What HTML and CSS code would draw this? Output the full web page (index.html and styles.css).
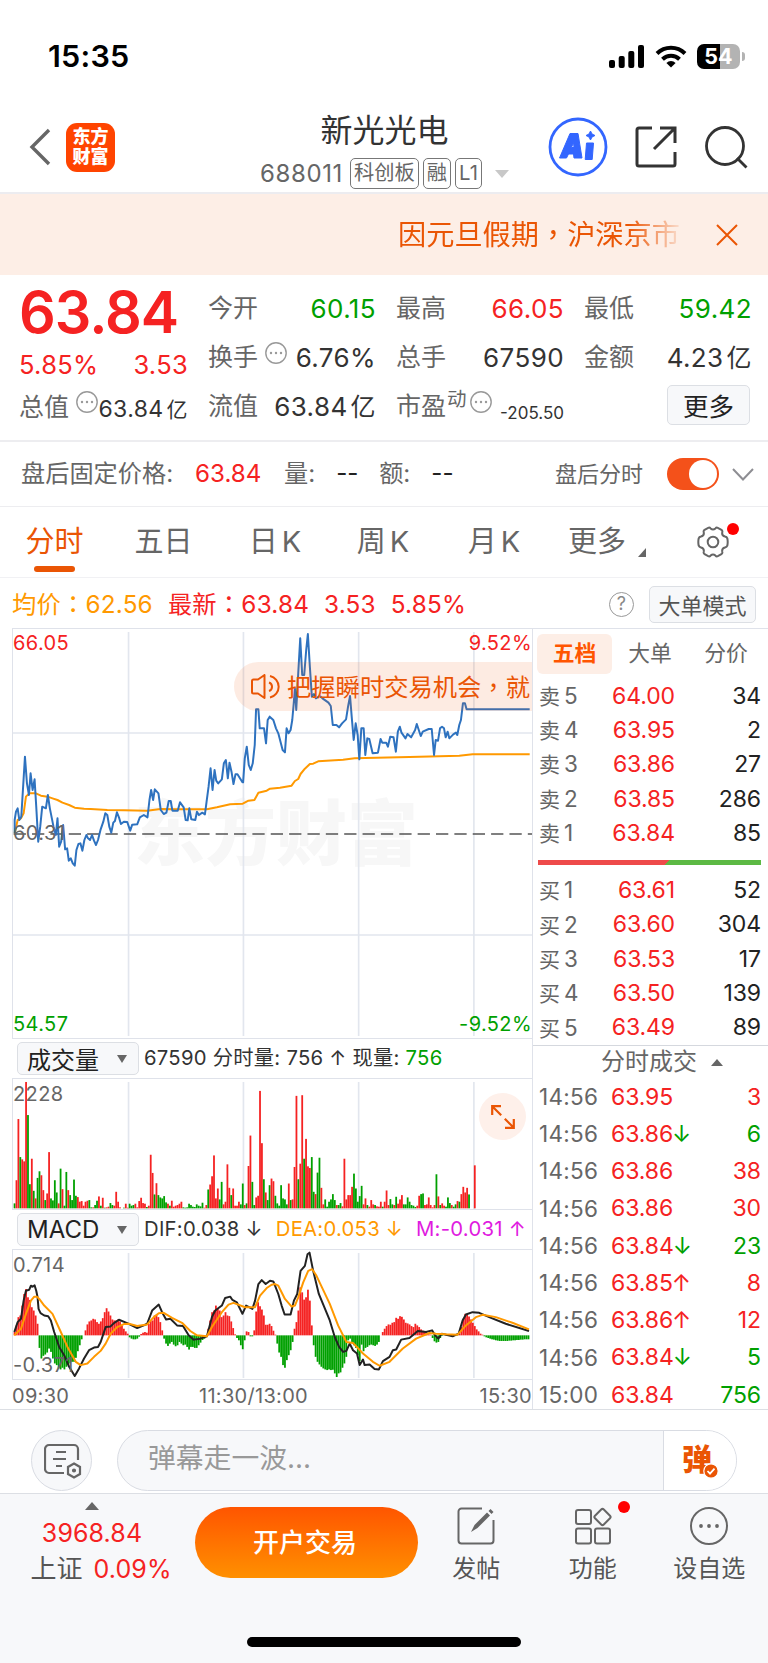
FILE: index.html
```html
<!DOCTYPE html>
<html lang="zh-CN">
<head>
    <meta charset="UTF-8">
    <meta name="viewport" content="width=device-width, initial-scale=1.0">
    <title>新光光电 688011</title>
    <link rel="stylesheet" href="styles.css">
</head>
<body>

    <!-- Status bar -->
    <div class="status-bar">
        <span class="clock">15:35</span>
        <div class="status-icons">
            <svg class="signal" width="36" height="23" viewBox="0 0 36 23">
                <rect x="0" y="15" width="6" height="8" rx="2"/>
                <rect x="9.7" y="11" width="6" height="12" rx="2"/>
                <rect x="19.3" y="6" width="6" height="17" rx="2"/>
                <rect x="29" y="0" width="6" height="23" rx="2"/>
            </svg>
            <svg class="wifi" width="32" height="23" viewBox="0 0 32 23" fill="none" stroke="#000" stroke-width="4">
                <path d="M2 8.5a20 20 0 0 1 28 0"/>
                <path d="M7.5 14.2a12.3 12.3 0 0 1 17 0"/>
                <path d="M16 22.5l-4.6-4.6a6.5 6.5 0 0 1 9.2 0z" fill="#000" stroke="none"/>
            </svg>
            <span class="battery">54</span>
            <span class="battery-tip"></span>
        </div>
    </div>

    <!-- Header -->
    <header class="header">
        <div class="header-left">
            <svg width="22" height="38" viewBox="0 0 22 38" fill="none" stroke="#666" stroke-width="3.4"><path d="M20 2L3 19l17 17"/></svg>
            <div class="logo">东方<br>财富</div>
        </div>
        <div class="header-title">
            <h1>新光光电</h1>
            <div class="stock-code">
                <span class="code">688011</span>
                <span class="tag">科创板</span>
                <span class="tag">融</span>
                <span class="tag">L1</span>
                <i class="tri-down"></i>
            </div>
        </div>
        <div class="header-right">
            <svg width="60" height="60" viewBox="0 0 60 60">
                <circle cx="30" cy="30" r="28" fill="none" stroke="#3366ff" stroke-width="2.8"/>
                <path d="M22 16.5h8l4 24.5h-8l-.5-4h-5l-2 4h-7z M23.500 30.500h2.500l-.5-5z" fill="#3366ff" fill-rule="evenodd" stroke="#3366ff" stroke-linejoin="round"/>
                <path d="M38.500 26h7l-1.300 16.500h-7z" fill="#3366ff" stroke="#3366ff" stroke-linejoin="round"/>
                <path d="M42.500 14l1.500 3 3 1.500-3 1.500-1.500 3-1.500-3-3-1.500 3-1.500z" fill="#3366ff" stroke="#3366ff"/>
            </svg>
            <svg width="42" height="42" viewBox="0 0 42 42" fill="none" stroke="#333" stroke-width="3">
                <path d="M17 2H4a2 2 0 0 0-2 2v34a2 2 0 0 0 2 2h34a2 2 0 0 0 2-2V26"/>
                <path d="M25 2h15v15M40 2L19 23"/>
            </svg>
            <svg width="43" height="43" viewBox="0 0 43 43" fill="none" stroke="#333" stroke-width="2.8">
                <circle cx="20" cy="20" r="18.500"/>
                <path d="M32 32l9.500 9.500"/>
            </svg>
        </div>
    </header>

    <!-- Notice -->
    <div class="notice">
        <div class="notice-text" lang="zh-TW">因元旦假期，沪深京市</div>
        <svg width="22" height="22" viewBox="0 0 22 22" stroke="#ea5504" stroke-width="2"><path d="M1 1l20 20M21 1L1 21"/></svg>
    </div>

    <!-- Quote -->
    <section class="quote">
        <div class="quote-main">
            <div class="price">63.84</div>
            <div class="item red"><span>5.85%</span><span>3.53</span></div>
            <div class="item cap"><label>总值</label><svg class="more-dot" viewBox="0 0 22 22"><use href="#dots"/></svg><span>63.84<em>亿</em></span></div>
        </div>
        <div class="quote-grid">
            <div class="item"><label>今开</label><span class="green">60.15</span></div>
            <div class="item"><label>最高</label><span class="red">66.05</span></div>
            <div class="item"><label>最低</label><span class="green">59.42</span></div>
            <div class="item"><label>换手</label><svg class="more-dot" viewBox="0 0 22 22"><use href="#dots"/></svg><span>6.76%</span></div>
            <div class="item"><label>总手</label><span>67590</span></div>
            <div class="item"><label>金额</label><span>4.23<em>亿</em></span></div>
            <div class="item"><label>流值</label><span>63.84<em>亿</em></span></div>
            <div class="item"><label>市盈</label><sup>动</sup><svg class="more-dot tight" viewBox="0 0 22 22"><use href="#dots"/></svg><span class="small">-205.50</span></div>
            <div class="item"><button class="btn-more">更多</button></div>
        </div>
    </section>

    <!-- After-hours row -->
    <div class="after-hours">
        <span class="after-price-label">盘后固定价格:</span>
        <span class="red after-price">63.84</span>
        <span>量:</span>
        <b>--</b>
        <span>额:</span>
        <b>--</b>
        <span class="after-switch-label">盘后分时</span>
        <i class="switch"></i>
        <svg width="22" height="13" viewBox="0 0 22 13" fill="none" stroke="#8e8e93" stroke-width="2"><path d="M1 1l10 10.500L21 1"/></svg>
    </div>

    <!-- Period tabs -->
    <nav class="tabs">
        <a class="active">分时</a>
        <a>五日</a>
        <a>日<i>K</i></a>
        <a>周<i>K</i></a>
        <a>月<i>K</i></a>
        <a class="tab-more">更多</a>
        <div class="gear">
            <svg width="34" height="32" viewBox="0 0 34 32" fill="none" stroke="#666" stroke-width="2">
                <path d="M12.200 1.800q1.400-.6 2.400.6 2.400 2.200 4.800 0 1-1.200 2.400-.6l3.600 2q1.300.9.900 2.300-.8 3.500 2.700 4.400 1.800.4 2.300 1.800.8 3.700 0 7.400-.5 1.400-2.300 1.800-3.500.9-2.700 4.400.4 1.400-.9 2.300l-3.600 2q-1.400.6-2.400-.6-2.400-2.200-4.800 0-1 1.200-2.400.6l-3.600-2q-1.300-.9-.9-2.300.8-3.500-2.700-4.400-1.800-.4-2.300-1.800-.8-3.700 0-7.400.5-1.400 2.300-1.800 3.500-.9 2.700-4.400-.4-1.400.9-2.300z"/>
                <circle cx="17" cy="16" r="5.300"/>
            </svg>
        </div>
    </nav>

    <!-- Average / latest price -->
    <div class="info" lang="zh-TW">
        <span class="orange">均价：62.56</span>
        <span class="red">最新：63.84</span>
        <span class="red">3.53</span>
        <span class="red">5.85%</span>
        <i class="help">?</i>
        <button class="btn-mode" lang="zh-CN">大单模式</button>
    </div>

    <main class="board">
        <!-- Charts -->
        <div class="charts">
            <div class="chart chart-price">
                <div class="watermark">东方财富</div>
                <svg viewBox="36 27 1563 1227" preserveAspectRatio="none">
                    <path class="grid" d="M384 36V1248M730 36V1248M1077 36V1248M1424 36V1248M36 339H1599M36 945H1599"/>
                    <path class="mid" d="M38 642H1599"/>
                    <polyline class="line avg" points="41,640 50,600 60,595 68,580 75,530 85,520 105,520 120,527 140,530 155,535 170,540 185,548 205,555 222,563 250,566 270,567 320,570 370,571 440,572 480,567 540,568 620,568 650,562 690,553 728,551 745,542 763,540 775,518 800,512 810,506 840,503 875,497 885,483 895,477 902,462 915,446 930,432 940,431 955,424 1030,419 1065,415 1230,411 1380,407 1420,403 1592,403"/>
                    <polyline class="line price-line" points="41,640 41,600 45,575 50,565 55,600 61,590 72,410 78,490 84,525 89,460 95,510 101,478 106,560 112,665 118,620 124,560 135,565 141,525 147,565 158,620 165,645 170,595 175,680 181,665 187,615 193,688 199,685 204,722 210,715 216,730 222,737 227,690 233,672 239,670 245,692 251,660 257,645 262,655 268,660 274,645 280,662 286,675 292,660 300,628 308,605 314,580 320,585 326,620 332,638 338,608 343,603 349,577 355,592 361,612 370,605 380,606 389,632 395,614 410,613 418,592 430,585 441,592 447,540 452,510 458,540 463,508 474,520 481,570 490,582 498,578 505,543 511,543 516,572 532,572 539,547 550,562 556,600 562,601 567,565 573,598 585,600 590,575 596,585 606,578 614,583 619,545 625,500 631,445 637,510 643,450 648,482 654,490 665,478 671,430 677,420 683,475 688,428 694,455 700,492 706,463 712,463 727,487 729,487 734,415 740,380 746,435 752,450 758,430 764,375 768,268 775,268 779,325 792,325 798,370 803,300 809,290 820,300 828,325 835,340 848,390 855,397 860,325 866,340 872,330 877,300 881,255 885,205 889,270 895,160 901,55 907,165 913,165 919,90 924,42 930,140 936,230 942,222 948,235 960,228 968,235 986,248 993,258 999,315 1010,315 1018,322 1027,310 1039,298 1045,260 1051,228 1056,290 1062,360 1068,310 1074,345 1079,418 1085,325 1092,325 1097,405 1103,355 1109,357 1119,400 1135,398 1143,357 1148,368 1160,368 1165,380 1172,350 1182,352 1189,395 1195,335 1201,320 1206,338 1218,355 1224,342 1235,352 1247,330 1252,312 1264,348 1270,335 1288,327 1297,327 1304,405 1309,360 1316,362 1322,325 1328,320 1334,325 1339,352 1345,335 1350,355 1362,343 1370,338 1374,345 1380,315 1385,300 1391,250 1397,250 1402,268 1592,268"/>
                </svg>
                <span class="label top left red">66.05</span>
                <span class="label top right red">9.52%</span>
                <span class="label middle left">60.31</span>
                <span class="label bottom left green">54.57</span>
                <span class="label bottom right green">-9.52%</span>
                <div class="bubble" lang="zh-TW">
                    <svg width="32" height="26" viewBox="0 0 32 26" fill="none" stroke="#ea5504" stroke-width="2" stroke-linejoin="round">
                        <path d="M2 7q0-1.500 1.500-1.500H8L14.500 1v23L8 19.500H3.500Q2 19.500 2 18z"/>
                        <path d="M19 8.500a4.500 4.500 0 0 1 0 8.500M20 2a11 11 0 0 1 0 21.500"/>
                    </svg>
                    <span>把握瞬时交易机会，就</span>
                </div>
            </div>

            <div class="indicator">
                <button class="select">成交量</button>
                <span>67590 分时量: 756 ↑ 现量: <span class="green">756</span></span>
            </div>
            <div class="chart chart-volume">
                <svg id="volume" viewBox="36 204 1563 393" preserveAspectRatio="none">
                    <path class="grid" d="M384 213V597M730 213V597M1077 213V597M1424 213V597"/>
                </svg>
                <span class="label top left">2228</span>
                <div class="expand">
                    <svg width="24" height="24" viewBox="0 0 24 24" fill="none" stroke="#ea5504" stroke-width="2.200">
                        <path d="M1.200 10V1.200H10M1.200 1.200l9 9M22.800 14v8.800H14M22.800 22.800l-9-9"/>
                    </svg>
                </div>
            </div>

            <div class="indicator macd-head">
                <button class="select">MACD</button>
                <span>DIF:0.038 ↓</span>
                <span class="orange">DEA:0.053 ↓</span>
                <span class="magenta">M:-0.031 ↑</span>
            </div>
            <div class="chart chart-macd">
                <svg viewBox="36 717 1563 390" preserveAspectRatio="none">
                    <path class="grid" d="M384 726V1104M730 726V1104M1077 726V1104M1424 726V1104"/>
                    <g id="macd"></g>
                    <polyline class="line dif" points="40,965 50,935 60,925 68,870 75,840 85,837 90,825 95,828 101,824 106,840 110,860 113,895 119,908 130,915 142,917 150,930 160,965 175,1010 190,1035 205,1070 222,1098 235,1075 250,1045 265,1020 280,1012 292,1010 300,995 315,950 330,948 340,938 355,928 380,938 410,953 430,945 440,940 455,900 475,882 485,905 497,927 510,925 530,945 548,947 565,975 580,988 600,985 620,978 635,920 645,900 665,885 675,862 690,858 697,868 710,875 727,910 738,885 757,895 765,870 775,820 785,808 797,820 810,810 820,812 835,850 845,885 854,912 872,912 882,870 892,850 902,780 915,765 923,730 929,725 940,780 957,850 990,930 1005,980 1018,1010 1030,1025 1040,1022 1050,1000 1060,1020 1072,1030 1080,1065 1090,1048 1095,1065 1110,1063 1125,1077 1138,1078 1150,1053 1170,1040 1180,1020 1190,1018 1205,988 1230,983 1255,962 1280,965 1298,960 1307,975 1317,985 1327,970 1360,978 1378,970 1390,930 1400,912 1420,905 1440,907 1470,920 1520,940 1590,962"/>
                    <polyline class="line avg" points="40,975 60,955 75,910 90,870 100,858 108,858 115,865 130,885 155,910 180,965 200,1010 225,1055 240,1065 260,1060 280,1040 300,1022 315,1000 330,970 350,950 370,941 385,940 410,947 440,942 460,920 475,908 490,907 515,922 545,937 570,962 590,975 620,978 635,950 665,905 685,882 700,877 735,890 765,890 780,855 800,832 815,822 825,820 835,825 855,865 875,888 885,885 895,860 910,815 925,780 937,775 950,795 990,880 1015,945 1040,995 1060,998 1090,1030 1120,1055 1140,1067 1170,1055 1210,1015 1250,985 1290,968 1310,970 1340,972 1375,973 1400,945 1430,920 1450,913 1490,920 1540,937 1590,957"/>
                </svg>
                <span class="label top left">0.714</span>
                <span class="label bottom left">-0.371</span>
            </div>
            <div class="axis"><span>09:30</span><span>11:30/13:00</span><span>15:30</span></div>
        </div>

        <!-- Order book and trades -->
        <aside class="side">
            <div class="side-tabs"><a class="active">五档</a><a>大单</a><a>分价</a></div>
            <div class="book">
                <div class="row"><label>卖<i>5</i></label><span class="red">64.00</span><b>34</b></div>
                <div class="row"><label>卖<i>4</i></label><span class="red">63.95</span><b>2</b></div>
                <div class="row"><label>卖<i>3</i></label><span class="red">63.86</span><b>27</b></div>
                <div class="row"><label>卖<i>2</i></label><span class="red">63.85</span><b>286</b></div>
                <div class="row"><label>卖<i>1</i></label><span class="red">63.84</span><b>85</b></div>
            </div>
            <div class="ratio"></div>
            <div class="book">
                <div class="row"><label>买<i>1</i></label><span class="red">63.61</span><b>52</b></div>
                <div class="row"><label>买<i>2</i></label><span class="red">63.60</span><b>304</b></div>
                <div class="row"><label>买<i>3</i></label><span class="red">63.53</span><b>17</b></div>
                <div class="row"><label>买<i>4</i></label><span class="red">63.50</span><b>139</b></div>
                <div class="row"><label>买<i>5</i></label><span class="red">63.49</span><b>89</b></div>
            </div>
            <div class="trades-head">分时成交 <i class="tri-up"></i></div>
            <div class="trades">
                <div class="row"><label>14:56</label><span class="red">63.95</span><b class="red">3</b></div>
                <div class="row"><label>14:56</label><span class="red">63.86<i class="green">↓</i></span><b class="green">6</b></div>
                <div class="row"><label>14:56</label><span class="red">63.86</span><b class="red">38</b></div>
                <div class="row"><label>14:56</label><span class="red">63.86</span><b class="red">30</b></div>
                <div class="row"><label>14:56</label><span class="red">63.84<i class="green">↓</i></span><b class="green">23</b></div>
                <div class="row"><label>14:56</label><span class="red">63.85<i>↑</i></span><b class="red">8</b></div>
                <div class="row"><label>14:56</label><span class="red">63.86<i>↑</i></span><b class="red">12</b></div>
                <div class="row"><label>14:56</label><span class="red">63.84<i class="green">↓</i></span><b class="green">5</b></div>
                <div class="row"><label>15:00</label><span class="red">63.84</span><b class="green">756</b></div>
            </div>
        </aside>
    </main>

    <!-- Comment bar -->
    <div class="comment-bar">
        <div class="comment-set">
            <svg width="38" height="36" viewBox="0 0 38 36" fill="none" stroke="#666" stroke-width="2.200">
                <path d="M20 30H5a4 4 0 0 1-4-4V6a4 4 0 0 1 4-4h25a4 4 0 0 1 4 4v11"/>
                <path d="M12 9h10M9 16h13M12 23h6"/>
                <path d="M30 20.500l6 3.500v7l-6 3.500-6-3.500v-7z"/>
                <circle cx="30" cy="27.500" r="1" fill="#666"/>
            </svg>
        </div>
        <div class="comment-input">
            <span>弹幕走一波...</span>
            <div class="comment-toggle">
                弹
                <svg width="16" height="16" viewBox="0 0 16 16"><circle cx="8" cy="8" r="7.200" fill="#ea5504" stroke="#fff" stroke-width="1.200"/><path d="M4.500 8l2.500 2.700 4.500-5" fill="none" stroke="#fff" stroke-width="1.800"/></svg>
            </div>
        </div>
    </div>

    <!-- Bottom bar -->
    <footer class="footer">
        <div class="index">
            <i class="tri-up"></i>
            <div class="red">3968.84</div>
            <div class="index-name"><label>上证</label><span class="red">0.09%</span></div>
        </div>
        <button class="btn-open">开户交易</button>
        <div class="action">
            <svg width="38" height="38" viewBox="0 0 38 38" fill="none" stroke="#666" stroke-width="2">
                <path d="M25 1.500H4.500a3 3 0 0 0-3 3v29a3 3 0 0 0 3 3h29a3 3 0 0 0 3-3V13"/>
                <path d="M14 25l3.500-7L30 5.500l3 3L20.500 21z" fill="#666" stroke="none"/>
                <path d="M31.500 4l2-2 3 3-2 2z" fill="#666" stroke="none"/>
            </svg>
            <span>发帖</span>
        </div>
        <div class="action has-dot">
            <svg width="38" height="38" viewBox="0 0 38 38" fill="none" stroke="#666" stroke-width="2">
                <rect x="2" y="3" width="15" height="14" rx="2"/>
                <rect x="2" y="21.500" width="15" height="15" rx="2"/>
                <rect x="21" y="21.500" width="15" height="15" rx="2"/>
                <path d="M27.200 2.500q1.300-1.300 2.600 0l6.200 6.200q1.300 1.300 0 2.600l-6.200 6.200q-1.300 1.300-2.600 0L21 11.300q-1.300-1.300 0-2.600z"/>
            </svg>
            <span>功能</span>
        </div>
        <div class="action">
            <svg width="38" height="38" viewBox="0 0 38 38">
                <circle cx="19" cy="19" r="18" fill="none" stroke="#666" stroke-width="2"/>
                <g fill="#666"><circle cx="11" cy="19" r="1.900"/><circle cx="19" cy="19" r="1.900"/><circle cx="27" cy="19" r="1.900"/></g>
            </svg>
            <span>设自选</span>
        </div>
        <div class="home-bar"></div>
    </footer>

    <svg class="defs">
        <symbol id="dots" viewBox="0 0 22 22">
            <circle cx="11" cy="11" r="10.200" fill="none" stroke="#999" stroke-width="1.400"/>
            <g fill="#999"><circle cx="6" cy="11" r="1.200"/><circle cx="11" cy="11" r="1.200"/><circle cx="16" cy="11" r="1.200"/></g>
        </symbol>
    </svg>

    <script>
        const STEP = 5.775;

        // One bar per minute, r = up, g = down
        const volume = 'g15 r85 r270 g155 r148 r142 r382 g282 g73 r150 g53 r30 g92 g112 r100 r55 g25 r45 r170 g30 g24 g85 g48 r15 g120 r58 g8 g110 r55 g40 g25 g87 g38 r34 r20 r22 r8 r20 r23 g25 g3 r3 g10 g23 r36 g8 r32 g2 r3 r5 g16 g10 r8 r50 r20 r3 g0 g2 r14 r2 g14 g8 g10 r14 r3 r22 r32 r16 r14 g4 r8 r162 r107 g42 r76 g40 g33 g30 g37 g18 r14 g8 r23 r5 r8 r10 r14 r20 g3 g2 g3 g14 g10 g5 g4 g12 g8 g6 g17 r2 r10 g57 r72 r97 r160 r30 r60 g27 g80 r12 r20 r133 r62 g40 r60 r8 r8 r20 g12 g75 r10 g15 r128 r220 g80 g10 r33 r38 r355 r197 g88 r48 g25 g70 r90 r82 g38 g15 g8 g70 g30 g27 g12 r75 g25 r27 r125 r340 g88 r135 r342 g150 r210 r127 r122 g155 g50 r43 g108 g153 r62 r12 g27 g5 g20 g27 g43 g25 r10 g10 g16 r6 r150 r27 r40 r40 r65 g105 g60 g20 g37 g68 r12 r30 g10 r5 r25 r12 g10 r6 r5 r20 g5 r20 r54 r10 g28 g12 r10 g35 r14 r27 r40 g12 g12 g33 g20 g10 g8 g4 r8 r38 g43 g45 r10 r12 r33 r10 r3 r10 g103 r36 g10 r15 r8 g5 g33 g16 r10 g5 g12 r22 g20 r43 r65 r48 r62 g42 g0 g0 r130';

        const macd = [10, 30, 55, 60, 90, 125, 140, 115, 107, 85, 75, 60, 35, -38, -70, -62, -58, -52, -40, -50, -70, -85, -90, -100, -103, -98, -103, -95, -88, -85, -80, -80, -68, -48, -30, -12, 0, 15, 33, 42, 45, 50, 48, 40, 35, 42, 52, 70, 82, 72, 60, 48, 45, 45, 48, 42, 30, 20, 12, 5, -6, -10, -12, -12, -10, -4, 4, 8, 10, 8, 35, 43, 45, 60, 62, 55, 40, 15, -10, -25, -32, -25, -20, -28, -33, -30, -20, -25, -30, -28, -35, -43, -35, -35, -38, -38, -30, -22, -14, -10, -3, 20, 45, 70, 75, 90, 80, 75, 55, 60, 70, 60, 58, 42, 22, 3, -8, -15, -30, -42, -15, 12, 10, -3, -3, 15, 72, 100, 88, 78, 60, 32, 32, 35, 28, 14, 2, -25, -52, -65, -90, -98, -75, -60, -45, -20, 20, 40, 75, 145, 130, 108, 115, 138, 105, 30, -30, -65, -80, -88, -95, -100, -103, -105, -103, -105, -104, -115, -126, -115, -112, -98, -85, -65, -15, -10, -20, -30, -38, -60, -78, -28, -48, -38, -35, -30, -28, -30, -32, -28, -20, 0, 10, 20, 28, 33, 32, 38, 40, 53, 50, 58, 56, 48, 38, 36, 33, 28, 25, 35, 30, 25, 18, 14, 10, 6, 3, 2, -8, -18, -22, -20, -8, -2, 0, 1, 1, 0, -1, -1, -1, -1, 5, 25, 50, 65, 62, 57, 48, 38, 28, 18, 12, 5, 2, -3, -6, -8, -10, -12, -13, -15, -16, -17, -17, -17, -17, -17, -16, -16, -15, -15, -14, -14, -13, -13, -12, -12, -12];

        function addBar(parent, i, zero, value, color) {
            const rect = document.createElementNS('http://www.w3.org/2000/svg', 'rect');
            rect.setAttribute('x', 38 + i * STEP);
            rect.setAttribute('width', 5.4);
            rect.setAttribute('y', value > 0 ? zero - value : zero);
            rect.setAttribute('height', Math.abs(value));
            rect.setAttribute('class', color);
            parent.appendChild(rect);
        }

        const volumeChart = document.getElementById('volume');
        volume.split(' ').forEach((v, i) => {
            addBar(volumeChart, i, 595, +v.slice(1), v[0] === 'r' ? 'up' : 'down');
        });

        const macdChart = document.getElementById('macd');
        macd.forEach((v, i) => addBar(macdChart, i, 975, v, v > 0 ? 'up' : 'down'));
    </script>

</body>
</html>
```
FILE: styles.css
```css
* {
    box-sizing: border-box;
}

body {
    margin: 0;
    width: 768px;
    background: #fff;
    color: #333;
    font-family: Inter, "Noto Sans CJK SC", sans-serif;
    font-size: 25px;
    line-height: 1;
    white-space: nowrap;
}

i, em {
    font-style: normal;
}

b {
    font-weight: 400;
}

button {
    font-family: Inter, "Noto Sans CJK SC", sans-serif;
    padding: 0;
    background: #f7f8fa;
    border: 1.5px solid #dcdfe4;
    border-radius: 5px;
}

svg {
    display: block;
    flex: none;
}

.defs {
    width: 0;
    height: 0;
    position: absolute;
}

.red { color: #f52222; }
.green { color: #00a000; }
.orange { color: #ff9900; }
.magenta { color: #e01be0; }

.tri-down, .tri-up {
    display: inline-block;
    border: 7px solid transparent;
    border-bottom-width: 0;
    border-top: 8px solid #c8c8c8;
}

.tri-up {
    border: 6px solid transparent;
    border-top-width: 0;
    border-bottom: 7px solid #666;
}

/* Status bar */
.status-bar {
    height: 100px;
    padding: 12px 22px 0 48px;
    display: flex;
    align-items: center;
    justify-content: space-between;
    color: #000;
}

.clock {
    font-size: 30.5px;
    font-weight: 600;
    letter-spacing: 0.2px;
}

.status-icons {
    display: flex;
    align-items: center;
    padding-right: 1px;
}

.wifi {
    margin: 0 10px 0 10px;
}

.battery {
    width: 43px;
    height: 25px;
    border-radius: 7px;
    background: linear-gradient(90deg, #000 54%, #b3b3b3 54%);
    color: #fff;
    font-size: 21.5px;
    font-weight: 700;
    line-height: 25px;
    text-align: center;
}

.battery-tip {
    width: 3px;
    height: 9px;
    margin-left: 2px;
    border-radius: 0 3px 3px 0;
    background: #b3b3b3;
}

/* Header */
.header {
    height: 94px;
    border-bottom: 2px solid #ececf0;
    display: grid;
    grid-template-columns: 1fr auto 1fr;
    padding: 0 20px 0 29px;
}

.header-left {
    display: flex;
    align-items: center;
    gap: 15px;
    padding-top: 2px;
}

.logo {
    width: 49px;
    height: 49px;
    border-radius: 11px;
    background: #ff4400;
    color: #fff;
    font-size: 18px;
    font-weight: 900;
    line-height: 20px;
    padding-top: 4px;
    text-align: center;
}

.header-title {
    padding: 13px 0 0;
    margin-left: -8px;
}

.header-title h1 {
    margin: 0;
    font-size: 32px;
    font-weight: 400;
    line-height: 36px;
    text-align: center;
}

.stock-code {
    display: flex;
    align-items: center;
    gap: 4px;
    margin-top: 9px;
    color: #666;
}

.code {
    font-size: 24px;
    letter-spacing: 0.6px;
    margin-right: 3px;
}

.tag {
    height: 31px;
    padding: 0 3px;
    border: 1.5px solid #777;
    border-radius: 5px;
    font-size: 20.3px;
    line-height: 28px;
}

.stock-code .tri-down {
    margin-left: 9px;
}

.header-right {
    display: flex;
    align-items: center;
    justify-content: flex-end;
    gap: 28px;
    padding-top: 2px;
}

.header-right svg:first-child {
    margin-right: -1px;
}

/* Notice */
.notice {
    height: 81px;
    background: #fdeee6;
    padding: 0 30px 0 398px;
    display: flex;
    align-items: center;
    justify-content: space-between;
}

.notice-text {
    width: 288px;
    color: #ea5504;
    font-family: Inter, "Noto Sans CJK TC", sans-serif;
    font-size: 28.2px;
    line-height: 40px;
    -webkit-mask-image: linear-gradient(90deg, #000 80%, transparent);
    mask-image: linear-gradient(90deg, #000 80%, transparent);
}

/* Quote */
.quote {
    height: 167px;
    padding: 9px 16px 0 19px;
    border-bottom: 2px solid #ededf0;
    display: flex;
    gap: 20px;
}

.quote-main {
    width: 169px;
}

.price {
    height: 57px;
    line-height: 56px;
    font-size: 57.5px;
    font-weight: 600;
    letter-spacing: -1px;
    color: #f52222;
}

.quote-main .item.red {
    height: 42px;
    padding-top: 6px;
    font-size: 25.5px;
    letter-spacing: 0.3px;
}

.quote-main .cap {
    height: 45px;
    padding-top: 3px;
}

.quote-grid {
    flex: 1;
    display: grid;
    grid-template-columns: repeat(3, 168px);
    column-gap: 20px;
    grid-auto-rows: 49px;
}

.item {
    display: flex;
    align-items: center;
    letter-spacing: 0.4px;
    font-size: 26px;
}

.item > span:last-child {
    margin-left: auto;
}

.item label {
    color: #666;
    font-size: 25px;
    letter-spacing: 0;
}

.item em {
    font-size: 25px;
    margin-left: 3px;
}

.item.cap > span {
    font-size: 23px;
    padding-top: 4px;
}

.item.cap em {
    font-size: 21px;
}

.item .small {
    font-size: 17px;
    padding-top: 13px;
    letter-spacing: 0;
}

.item sup {
    color: #666;
    font-size: 19.5px;
    margin: -14px 0 0 1px;
    vertical-align: 0;
}

.more-dot {
    width: 22px;
    height: 22px;
    margin: -9px 0 0 7px;
}

.cap .more-dot {
    margin-top: -11px;
}

.more-dot.tight {
    margin-left: 3px;
}

.btn-more {
    width: 83px;
    height: 40px;
    margin: -4px 2px 0 auto;
    font-size: 25.5px;
    color: #222;
}

/* After-hours row */
.after-hours {
    height: 65px;
    padding: 0 14px 0 21px;
    border-bottom: 1px solid #ededf0;
    display: flex;
    align-items: center;
    font-size: 24.2px;
    color: #666;
}

.after-hours b {
    width: 43px;
    color: #222;
    margin-left: 21px;
}

.after-price-label {
    width: 174px;
}

.after-price {
    width: 89px;
}

.after-switch-label {
    margin-left: auto;
    font-size: 22px;
}

.switch {
    width: 52px;
    height: 32px;
    margin: 0 13px 0 24px;
    border-radius: 16px;
    background: #f4511a;
    display: flex;
    justify-content: flex-end;
    padding: 2px;
}

.switch::after {
    content: "";
    width: 28px;
    height: 28px;
    border-radius: 50%;
    background: #fff;
}

/* Period tabs */
.tabs {
    height: 71px;
    border-bottom: 1px solid #f1f1f4;
    display: grid;
    grid-template-columns: 109px 109px 114px 102px 120px 86px 128px;
    font-size: 29px;
    color: #666;
    text-align: center;
    line-height: 70px;
}

.tabs a {
    display: flex;
    justify-content: center;
    position: relative;
}

.tabs i {
    margin-left: 4px;
}

.tabs .active {
    color: #ea5504;
}

.tabs .active::after {
    content: "";
    position: absolute;
    left: 34px;
    bottom: 5px;
    width: 41px;
    height: 6px;
    border-radius: 3px;
    background: #ea5504;
}

.tab-more::after {
    content: "";
    position: absolute;
    right: -6px;
    bottom: 20px;
    border-left: 8px solid transparent;
    border-bottom: 9px solid #666;
}

.gear {
    position: relative;
    padding: 19px 0 0 56px;
}

.gear::after {
    content: "";
    position: absolute;
    left: 87px;
    top: 16px;
    width: 12px;
    height: 12px;
    border-radius: 50%;
    background: #ff0000;
}

/* Info row */
.info {
    height: 50px;
    padding: 2px 12px 0 12px;
    display: flex;
    align-items: center;
    gap: 15px;
    font-family: Inter, "Noto Sans CJK TC", sans-serif;
    font-size: 24.3px;
    letter-spacing: 0.2px;
}

.help {
    width: 25px;
    height: 25px;
    margin-left: auto;
    border: 1.5px solid #999;
    border-radius: 50%;
    color: #888;
    font-size: 18px;
    line-height: 22px;
    text-align: center;
}

.btn-mode {
    width: 107px;
    height: 37px;
    font-size: 22px;
    color: #555;
}

/* Charts */
.board {
    display: flex;
    height: 782px;
    border-bottom: 1px solid #dcdfe4;
}

.charts {
    width: 533px;
    padding-left: 12px;
    border-right: 1px solid #dfe2ea;
}

.chart {
    position: relative;
    border: 1px solid #dfe2ea;
    border-width: 1px 0 1px 1px;
}

.chart > svg {
    width: 100%;
    height: 100%;
    position: relative;
}

.chart-price {
    height: 411px;
}

.chart-volume {
    height: 132px;
}

.chart-macd {
    height: 131px;
}

.grid {
    stroke: #e2e6ee;
    stroke-width: 5;
    fill: none;
}

.mid {
    stroke: #555;
    stroke-width: 5;
    stroke-dasharray: 37 18.300;
}

.line {
    fill: none;
    stroke-width: 6;
    stroke-linejoin: round;
}

.price-line { stroke: #2e72bf; }
.avg { stroke: #ff9900; }
.dif { stroke: #222; }
.up { fill: #f52222; }
.down { fill: #00a000; }

.label {
    position: absolute;
    font-size: 20px;
    letter-spacing: 0.4px;
    color: #666;
}

.label.red { color: #f52222; }
.label.green { color: #00a000; }
.label.left { left: 0; }
.label.right { right: 0; }
.label.top { top: 4px; }
.label.middle { top: 194px; }
.label.bottom { bottom: 4px; }

.chart-volume .label.top,
.chart-macd .label.top {
    top: 5px;
}

.watermark {
    position: absolute;
    left: 121px;
    top: 164px;
    font-size: 71px;
    font-weight: 900;
    line-height: 80px;
    color: #f7f7f7;
}

.bubble {
    position: absolute;
    right: 0;
    top: 33px;
    width: 298px;
    height: 49px;
    padding-left: 16px;
    border-radius: 25px 0 0 25px;
    background: rgba(236, 92, 20, 0.12);
    display: flex;
    align-items: center;
    gap: 5px;
    color: #ea5504;
    font-family: Inter, "Noto Sans CJK TC", sans-serif;
    font-size: 24.3px;
    line-height: 36px;
}

.indicator {
    height: 39px;
    padding-left: 5px;
    display: flex;
    align-items: center;
    gap: 5px;
    font-size: 20.3px;
    letter-spacing: 0.25px;
}

.macd-head {
    gap: 13px;
}

.macd-head .select {
    margin-right: -8px;
}

.select {
    width: 122px;
    height: 33px;
    padding: 0 11px 0 9px;
    display: flex;
    align-items: center;
    justify-content: space-between;
    font-size: 24px;
    color: #222;
}

.select::after {
    content: "";
    border: 5px solid transparent;
    border-bottom-width: 0;
    border-top: 8px solid #666;
}

.expand {
    position: absolute;
    right: 6px;
    top: 14px;
    width: 47px;
    height: 47px;
    border-radius: 50%;
    background: #fef0ea;
    display: flex;
    align-items: center;
    justify-content: center;
}

.axis {
    height: 30px;
    padding-top: 2px;
    display: grid;
    grid-template-columns: 187px 1fr auto;
    align-items: center;
    font-size: 20px;
    letter-spacing: 0.3px;
    color: #666;
}

/* Order book */
.side {
    width: 235px;
    border-top: 1px solid #dfe2ea;
}

.side-tabs {
    height: 50px;
    padding: 5px 6px 0 4px;
    display: grid;
    grid-template-columns: 75px 76px 76px;
    font-size: 21.800px;
    color: #666;
    text-align: center;
    line-height: 39px;
}

.side-tabs .active {
    height: 40px;
    border-radius: 6px;
    background: #fdeee6;
    color: #ff5500;
    font-weight: 700;
}

.row {
    height: 34.300px;
    padding: 0 7px 0 6px;
    display: grid;
    grid-template-columns: 61px 75px 1fr;
    align-items: center;
    font-size: 23px;
    letter-spacing: -0.1px;
    color: #222;
}

.row label {
    font-size: 21px;
    color: #666;
}

.row label i {
    font-size: 22.500px;
    margin-left: 4px;
}

.row span {
    text-align: right;
}

.row b {
    text-align: right;
}

.ratio {
    height: 5px;
    margin: 10px 7px 8px 5px;
    background: linear-gradient(135deg, #ee4a4a 57.500%, #5cb944 57.500%);
}

.trades-head {
    height: 33.500px;
    border-top: 1px solid #d5d8de;
    padding: 0 20px 0 68px;
    display: flex;
    align-items: center;
    gap: 14px;
    font-size: 24px;
    color: #666;
}

.trades .row {
    height: 37.250px;
    grid-template-columns: 72px 80px 1fr;
}

.trades .row label {
    font-size: 22.500px;
    letter-spacing: 0.3px;
}

.trades .row span {
    text-align: left;
}

.trades i {
    display: inline-block;
    width: 16px;
    margin-left: -1px;
}

/* Comment bar */
.comment-bar {
    height: 83px;
    padding: 20px 31px 0;
    display: flex;
    gap: 25px;
}

.comment-set {
    width: 61px;
    height: 61px;
    padding-left: 3px;
    border: 1px solid #d9dce3;
    border-radius: 50%;
    background: #f7f8fa;
    display: flex;
    align-items: center;
    justify-content: center;
}

.comment-input {
    flex: 1;
    height: 61px;
    border: 1px solid #d9dce3;
    border-radius: 31px;
    background: #f7f8fa;
    padding-left: 30px;
    display: flex;
    align-items: center;
    justify-content: space-between;
    overflow: hidden;
    color: #999;
    font-size: 27.800px;
}

.comment-input > span {
    margin-top: -3px;
}

.comment-toggle {
    position: relative;
    width: 73px;
    height: 61px;
    padding-left: 18px;
    border-left: 1px solid #d9dce3;
    background: #fff;
    color: #ea5504;
    font-size: 30px;
    font-weight: 900;
    line-height: 58px;
}

.comment-toggle svg {
    position: absolute;
    left: 39px;
    top: 33px;
}

/* Bottom bar */
.footer {
    position: relative;
    height: 171px;
    border-top: 1px solid #dcdfe4;
    background: #f7f8fa;
    display: flex;
}

.index {
    width: 195px;
    padding: 5px 11px 0 0;
    text-align: center;
    line-height: 36px;
    font-size: 25px;
    letter-spacing: 0.1px;
}

.index .tri-up {
    display: block;
    width: 14px;
    margin: 3px auto 5px;
    border-width: 0 7px 8px;
}

.index-name {
    display: flex;
    justify-content: center;
    gap: 11px;
    padding-left: 18px;
}

.index label {
    color: #555;
    font-size: 26px;
}

.btn-open {
    width: 223px;
    height: 71px;
    margin-top: 13px;
    padding: 0 3px 4px 0;
    border: 0;
    border-radius: 36px;
    background: linear-gradient(#ff5500, #ff9000);
    color: #fff;
    font-size: 26px;
    font-weight: 500;
}

.action {
    width: 116.500px;
    padding-top: 13px;
    position: relative;
    display: flex;
    flex-direction: column;
    align-items: center;
    gap: 12px;
    font-size: 24px;
    color: #555;
}

.action.has-dot::after {
    content: "";
    position: absolute;
    left: 83px;
    top: 7px;
    width: 12px;
    height: 12px;
    border-radius: 50%;
    background: #ff0000;
}

.home-bar {
    position: absolute;
    left: 247px;
    bottom: 17px;
    width: 274px;
    height: 10px;
    border-radius: 5px;
    background: #000;
}
```
